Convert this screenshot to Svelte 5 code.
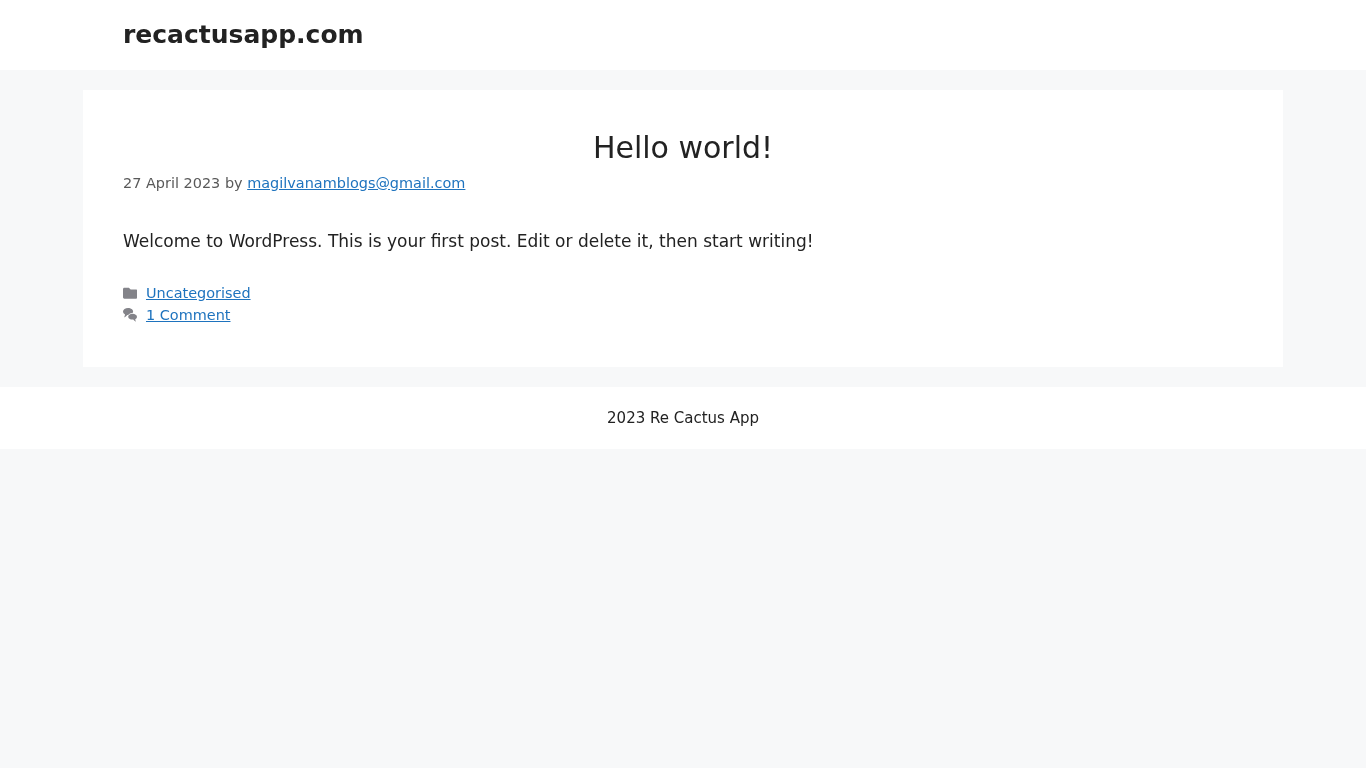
<script>
	const title = 'Hello world!';
</script>

<div class="page">
	<header class="site-header">
		<div class="brand">recactusapp.com</div>
	</header>

	<main class="content">
		<article class="post">
			<h1>{title}</h1>
			<div class="meta">27 April 2023 by <a href="#author">magilvanamblogs@gmail.com</a></div>
			<p>Welcome to WordPress. This is your first post. Edit or delete it, then start writing!</p>
			<footer class="post-footer">
				<div class="row">
					<svg class="icon" viewBox="0 0 512 512"><path d="M464 128H272l-64-64H48C21.49 64 0 85.49 0 112v288c0 26.51 21.49 48 48 48h416c26.51 0 48-21.49 48-48V176c0-26.51-21.49-48-48-48z" /></svg>
					<a href="#cat">Uncategorised</a>
				</div>
				<div class="row">
					<svg class="icon" viewBox="0 0 512 512">
						<path d="M180 0C80 0 0 56 0 126c0 42 28 78 72 102-4 40-16 76-36 110 48-22 88-52 116-92 9 1 18 2 28 2 100 0 180-56 180-122S280 0 180 0z" />
						<path class="front" d="M340 200c-86 0-156 48-156 106s70 106 156 106c8 0 16-1 24-2 22 30 54 58 98 78-16-30-26-60-28-92 40-20 62-54 62-90 0-58-70-106-156-106z" />
					</svg>
					<a href="#comments">1 Comment</a>
				</div>
			</footer>
		</article>
	</main>

	<footer class="site-footer">2023 Re Cactus App</footer>
</div>

<style>
	:global(body) {
		background: #f7f8f9;
	}

	.page {
		min-height: 768px;
		background: #f7f8f9;
		color: #222222;
		font-family: 'DejaVu Sans', sans-serif;
		font-size: 17px;
		line-height: 1.5;
		will-change: transform; /* grayscale text antialiasing */
	}

	.site-header {
		height: 70px;
		background: #ffffff;
		padding-left: 123px;
		box-sizing: border-box;
	}

	.brand {
		font-size: 25px;
		font-weight: 700;
		line-height: 70px;
		height: 70px;
	}

	.content {
		padding: 20px 83px;
	}

	.post {
		background: #ffffff;
		padding: 40px;
		height: 277px;
		box-sizing: border-box;
	}

	h1 {
		margin: 0;
		font-size: 30px;
		font-weight: 400;
		line-height: 36px;
		text-align: center;
	}

	.meta {
		margin-top: 6px;
		font-size: 14.45px;
		line-height: 22px;
		color: #595959;
	}

	a {
		color: #1e73be;
	}

	p {
		margin: 34px 0 0;
		font-size: 17px;
		line-height: 26px;
	}

	.post-footer {
		margin-top: 29px;
		font-size: 14.45px;
	}

	.row {
		display: flex;
		align-items: center;
		gap: 8.55px;
		height: 22px;
	}

	.icon {
		width: 14.45px;
		height: 14.45px;
		fill: #838389;
		flex: none;
		position: relative;
		top: -0.5px;
	}

	.front {
		stroke: #ffffff;
		stroke-width: 40;
		paint-order: stroke;
	}

	.site-footer {
		height: 62px;
		background: #ffffff;
		font-size: 15px;
		line-height: 62px;
		text-align: center;
	}
</style>
